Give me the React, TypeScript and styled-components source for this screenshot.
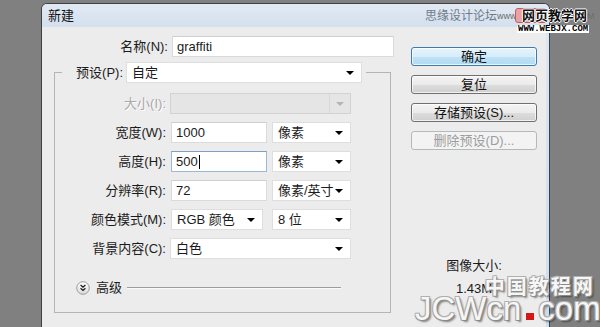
import React from "react"
import styled, { createGlobalStyle } from "styled-components"

const GlobalStyle = createGlobalStyle`
    html, body {
        margin: 0;
        padding: 0;
        background: #808080;
    }
    body {
        font-family: "Liberation Sans", "Noto Sans CJK SC", sans-serif;
        font-size: 13px;
        color: #1b1b1b;
    }
`

const Page = styled.div`
    position: relative;
    width: 600px;
    height: 327px;
    overflow: hidden;
    box-sizing: border-box;
    padding: 3px 0 0 41px;
    background: #808080;
`

const Window = styled.div`
    width: 509px;
    height: 340px;
    box-sizing: border-box;
    border: 1px solid #3c4146;
    border-bottom: none;
    border-radius: 6px 6px 0 0;
    background: linear-gradient(#dbe7f4, #c9ddef);
    display: flex;
    flex-direction: column;
`

const TitleBar = styled.div`
    height: 23px;
    flex-shrink: 0;
    display: flex;
    align-items: center;
    justify-content: space-between;
    padding: 0 52px 0 6px;
    border-radius: 5px 5px 0 0;
    background: linear-gradient(#e1e9f3, #d4e0ee);
`

const Title = styled.span`
    line-height: 16px;
    color: #111;
`

const TitleMark = styled.span`
    font-size: 12px;
    line-height: 16px;
    color: #6f7b89;
`

const Body = styled.div`
    flex: 1;
    margin-right: 3px;
    background: #ececec;
    display: flex;
    padding-top: 9px;
`

const LeftCol = styled.div`
    width: 353px;
    display: flex;
    flex-direction: column;
`

const Row = styled.div<{ $gap?: number }>`
    display: flex;
    align-items: center;
    gap: ${(p) => p.$gap ?? 4}px;
    height: 21px;
`

const Label = styled.span<{ $w: number; $disabled?: boolean }>`
    width: ${(p) => p.$w}px;
    flex-shrink: 0;
    text-align: right;
    white-space: nowrap;
    line-height: 16px;
    color: ${(p) => (p.$disabled ? "#a8a8a8" : "#1b1b1b")};
    text-shadow: ${(p) => (p.$disabled ? "1px 1px 0 #fff" : "none")};
`

const TextField = styled.div<{ $w: number; $focus?: boolean }>`
    width: ${(p) => p.$w}px;
    height: 21px;
    box-sizing: border-box;
    background: #fff;
    border: 1px solid ${(p) => (p.$focus ? "#9cb8d6" : "#dadada")};
    border-top-color: ${(p) => (p.$focus ? "#7f9fc4" : "#cfcfcf")};
    padding-left: 4px;
    display: flex;
    align-items: center;
    line-height: 16px;
`

const Caret = styled.span`
    display: inline-block;
    width: 1px;
    height: 14px;
    background: #000;
    margin-left: 1px;
`

const Select = styled.div<{ $w: number; $disabled?: boolean; $offset?: number }>`
    width: ${(p) => p.$w}px;
    height: 21px;
    box-sizing: border-box;
    margin-left: ${(p) => p.$offset ?? 0}px;
    background: ${(p) => (p.$disabled ? "#e5e5e5" : "#fff")};
    border: 1px solid ${(p) => (p.$disabled ? "#d2d2d2" : "#dedede")};
    padding: 0 7px 0 5px;
    display: flex;
    align-items: center;
    justify-content: space-between;
    line-height: 16px;
    white-space: nowrap;
`

const Arrow = styled.span<{ $disabled?: boolean }>`
    width: 0;
    height: 0;
    flex-shrink: 0;
    border-left: 4px solid transparent;
    border-right: 4px solid transparent;
    border-top: 4px solid ${(p) => (p.$disabled ? "#b4b4b4" : "#000")};
`

const DisabledArrowBox = styled.span`
    align-self: stretch;
    display: flex;
    align-items: center;
    padding-left: 6px;
    margin-right: -1px;
    border-left: 1px solid #d8d8d8;
`

const Group = styled.fieldset`
    margin: 5px 0 0 12px;
    width: 337px;
    box-sizing: border-box;
    border: 1px solid #b4b4b4;
    padding: 0 0 17px 0;
    min-width: 0;
`

const Legend = styled.legend`
    margin-left: 7px;
    padding: 0 4px 0 0;
`

const GroupBody = styled.div`
    display: flex;
    flex-direction: column;
    gap: 8px;
    padding-top: 10px;
`

const AdvancedRow = styled.div`
    display: flex;
    align-items: center;
    height: 15px;
    margin: 13px 49px 0 21px;
`

const AdvancedText = styled.span`
    margin: 0 5px 0 6px;
    line-height: 16px;
`

const Rule = styled.div`
    flex: 1;
    height: 1px;
    background: #9c9c9c;
    border-bottom: 1px solid #fafafa;
`

const RightCol = styled.div`
    width: 126px;
    padding: 11px 0 0 16px;
    display: flex;
    flex-direction: column;
    gap: 9px;
`

const Button = styled.div<{ $variant?: "default" | "disabled" }>`
    height: 19px;
    box-sizing: border-box;
    border-radius: 3px;
    display: flex;
    align-items: center;
    justify-content: center;
    line-height: 16px;
    border: 1px solid
        ${(p) =>
            p.$variant === "default"
                ? "#3d7bad"
                : p.$variant === "disabled"
                ? "#b5b9bc"
                : "#707070"};
    background: ${(p) =>
        p.$variant === "default"
            ? "linear-gradient(#e6f4fc 0%, #d6edfa 50%, #bfe2f6 51%, #b2dbf3 100%)"
            : p.$variant === "disabled"
            ? "#f3f3f3"
            : "linear-gradient(#f4f4f4 0%, #ebebeb 50%, #dddddd 51%, #d0d0d0 100%)"};
    box-shadow: inset 0 0 0 1px
        ${(p) => (p.$variant === "disabled" ? "transparent" : "rgba(255,255,255,0.7)")};
    color: ${(p) => (p.$variant === "disabled" ? "#9d9d9d" : "#111")};
`

const SizeInfo = styled.div`
    margin-top: 99px;
    display: flex;
    flex-direction: column;
    align-items: center;
    gap: 7px;
    line-height: 16px;
`

/* pasted-on watermarks */
const TopMark = styled.div`
    position: absolute;
    left: 497px;
    top: 7px;
    width: 96px;
    height: 26px;
`

const TopMarkBox = styled.div`
    position: absolute;
    left: 18px;
    top: 1px;
    width: 32px;
    height: 15px;
    border-radius: 3px;
    background: #e9a3a3;
    border: 1px solid #c45b5b;
    box-sizing: border-box;
`

const TopMarkSmall = styled.span<{ $left: number }>`
    position: absolute;
    left: ${(p) => p.$left}px;
    top: 4px;
    font-size: 9px;
    line-height: 10px;
    color: #6d6d6d;
`

const TopMarkTitle = styled.span`
    position: absolute;
    left: 25px;
    top: 0;
    font-size: 13px;
    font-weight: bold;
    line-height: 17px;
    color: #111;
    white-space: nowrap;
    text-shadow: 1px 0 0 #fff, -1px 0 0 #fff, 0 1px 0 #fff, 0 -1px 0 #fff;
`

const TopMarkUrl = styled.span`
    position: absolute;
    left: 20px;
    top: 18px;
    padding: 0 1px;
    background: #fff;
    font-family: "Liberation Mono", monospace;
    font-size: 9px;
    font-weight: bold;
    line-height: 8px;
    color: #000;
    white-space: nowrap;
`

const BottomMark = styled.div`
    position: absolute;
    left: 415px;
    top: 276px;
    display: flex;
    flex-direction: column;
    align-items: flex-end;
    pointer-events: none;
`

const outline =
    "1px 1px 0 #8a8a8a, -1px -1px 0 #b0b0b0, 1px -1px 0 #b0b0b0, -1px 1px 0 #a0a0a0, 2px 2px 2px rgba(0,0,0,0.45)"

const MarkCn = styled.span`
    font-size: 20px;
    font-weight: bold;
    letter-spacing: 2px;
    line-height: 22px;
    color: #f6f6f6;
    text-shadow: ${outline};
    margin-right: 6px;
    white-space: nowrap;
`

const MarkLatin = styled.div`
    display: flex;
    align-items: baseline;
    margin-top: -6px;
`

const MarkWord = styled.span`
    font-family: "Liberation Sans", sans-serif;
    font-size: 33px;
    line-height: 33px;
    color: #f6f6f6;
    text-shadow: ${outline};
    white-space: nowrap;
`

const RedDot = styled.span`
    display: inline-block;
    width: 8px;
    height: 7px;
    background: #d41616;
    margin: 0 4px 0 5px;
`

const AdvancedIcon = () => (
    <svg width="14" height="14" viewBox="0 0 14 14">
        <defs>
            <linearGradient id="adv" x1="0" y1="0" x2="0" y2="1">
                <stop offset="0" stopColor="#ffffff" />
                <stop offset="1" stopColor="#d9d9d9" />
            </linearGradient>
        </defs>
        <circle cx="7" cy="7" r="6.3" fill="url(#adv)" stroke="#9b9b9b" />
        <path
            d="M4.6 4 L7 6.2 L9.4 4 M4.6 7.2 L7 9.4 L9.4 7.2"
            fill="none"
            stroke="#1e1e1e"
            strokeWidth="1.3"
        />
    </svg>
)

const App = () => {
    return (
        <Page>
            <GlobalStyle />
            <Window>
                <TitleBar>
                    <Title>新建</Title>
                    <TitleMark>思缘设计论坛</TitleMark>
                </TitleBar>
                <Body>
                    <LeftCol>
                        <Row>
                            <Label $w={126}>名称(N):</Label>
                            <TextField $w={222}>graffiti</TextField>
                        </Row>
                        <Group>
                            <Legend>
                                <Row $gap={3}>
                                    <Label $w={61}>预设(P):</Label>
                                    <Select $w={236}>
                                        自定
                                        <Arrow />
                                    </Select>
                                </Row>
                            </Legend>
                            <GroupBody>
                                <Row>
                                    <Label $w={111} $disabled>
                                        大小(I):
                                    </Label>
                                    <Select $w={181} $disabled>
                                        <span />
                                        <DisabledArrowBox>
                                            <Arrow $disabled />
                                        </DisabledArrowBox>
                                    </Select>
                                </Row>
                                <Row $gap={5}>
                                    <Label $w={111}>宽度(W):</Label>
                                    <TextField $w={96}>1000</TextField>
                                    <Select $w={79}>
                                        像素
                                        <Arrow />
                                    </Select>
                                </Row>
                                <Row $gap={5}>
                                    <Label $w={111}>高度(H):</Label>
                                    <TextField $w={96} $focus>
                                        500
                                        <Caret />
                                    </TextField>
                                    <Select $w={79}>
                                        像素
                                        <Arrow />
                                    </Select>
                                </Row>
                                <Row $gap={5}>
                                    <Label $w={111}>分辨率(R):</Label>
                                    <TextField $w={96}>72</TextField>
                                    <Select $w={79}>
                                        像素/英寸
                                        <Arrow />
                                    </Select>
                                </Row>
                                <Row $gap={5}>
                                    <Label $w={111}>颜色模式(M):</Label>
                                    <Select $w={92}>
                                        RGB 颜色
                                        <Arrow />
                                    </Select>
                                    <Select $w={79} $offset={4}>
                                        8 位
                                        <Arrow />
                                    </Select>
                                </Row>
                                <Row>
                                    <Label $w={111}>背景内容(C):</Label>
                                    <Select $w={181}>
                                        白色
                                        <Arrow />
                                    </Select>
                                </Row>
                                <AdvancedRow>
                                    <AdvancedIcon />
                                    <AdvancedText>高级</AdvancedText>
                                    <Rule />
                                </AdvancedRow>
                            </GroupBody>
                        </Group>
                    </LeftCol>
                    <RightCol>
                        <Button $variant="default">确定</Button>
                        <Button>复位</Button>
                        <Button>存储预设(S)...</Button>
                        <Button $variant="disabled">删除预设(D)...</Button>
                        <SizeInfo>
                            <span>图像大小:</span>
                            <span>1.43M</span>
                        </SizeInfo>
                    </RightCol>
                </Body>
            </Window>

            <TopMark>
                <TopMarkSmall $left={0}>www</TopMarkSmall>
                <TopMarkBox />
                <TopMarkTitle>网页教学网</TopMarkTitle>
                <TopMarkSmall $left={90}>M</TopMarkSmall>
                <TopMarkUrl>WWW.WEBJX.COM</TopMarkUrl>
            </TopMark>

            <BottomMark>
                <MarkCn>中国教程网</MarkCn>
                <MarkLatin>
                    <MarkWord>JCWcn</MarkWord>
                    <RedDot />
                    <MarkWord>com</MarkWord>
                </MarkLatin>
            </BottomMark>
        </Page>
    )
}

export default App
